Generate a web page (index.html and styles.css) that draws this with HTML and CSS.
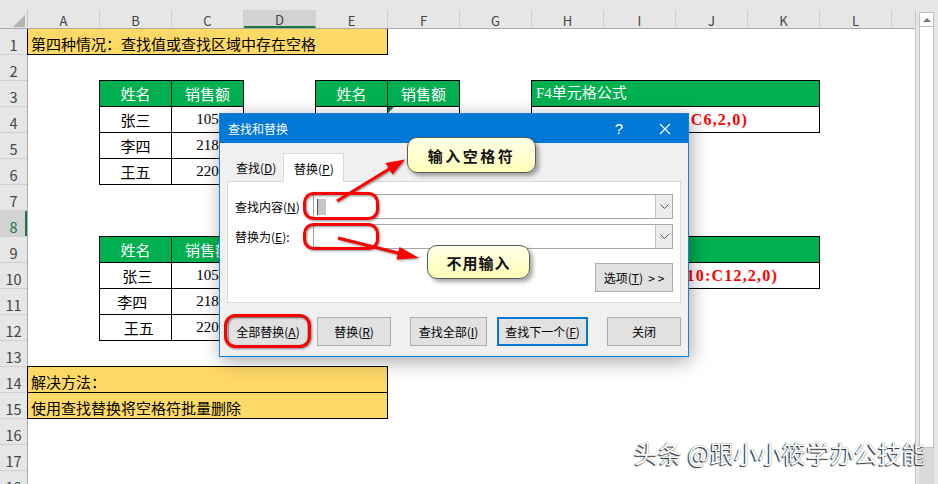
FILE: index.html
```html
<!DOCTYPE html>
<html lang="zh-CN">
<head>
    <meta charset="UTF-8">
    <meta name="viewport" content="width=device-width, initial-scale=1.0">
    <title>查找和替换 - 空格</title>
    <link rel="stylesheet" href="styles.css">
</head>
<body>
<div class="app">
    <div class="topbar"></div>

    <div class="workspace">
        <div class="sheet">
            <div class="col-heads">
                <div class="corner"><span class="corner-tri"></span></div>
                <div class="col-head">A</div>
                <div class="col-head">B</div>
                <div class="col-head">C</div>
                <div class="col-head sel">D</div>
                <div class="col-head">E</div>
                <div class="col-head">F</div>
                <div class="col-head">G</div>
                <div class="col-head">H</div>
                <div class="col-head">I</div>
                <div class="col-head">J</div>
                <div class="col-head">K</div>
                <div class="col-head">L</div>
                <div class="col-head last"></div>
            </div>

            <div class="sheet-body">
                <div class="row-heads">
                    <div class="row-head">1</div>
                    <div class="row-head">2</div>
                    <div class="row-head">3</div>
                    <div class="row-head">4</div>
                    <div class="row-head">5</div>
                    <div class="row-head">6</div>
                    <div class="row-head">7</div>
                    <div class="row-head sel">8</div>
                    <div class="row-head">9</div>
                    <div class="row-head">10</div>
                    <div class="row-head">11</div>
                    <div class="row-head">12</div>
                    <div class="row-head">13</div>
                    <div class="row-head">14</div>
                    <div class="row-head">15</div>
                    <div class="row-head">16</div>
                    <div class="row-head">17</div>
                    <div class="row-head">18</div>
                </div>

                <div class="cells">
                    <div class="blk blk-title">
                        <div class="c y">第四种情况：查找值或查找区域中存在空格</div>
                    </div>

                    <!-- B3:C6 -->
                    <div class="blk cols-2 blk-t1">
                        <div class="c hd">姓名</div>
                        <div class="c hd">销售额</div>
                        <div class="c">张三</div>
                        <div class="c num">105</div>
                        <div class="c">李四</div>
                        <div class="c num">218</div>
                        <div class="c">王五</div>
                        <div class="c num">220</div>
                    </div>

                    <!-- E3:F4 -->
                    <div class="blk cols-2 blk-t2">
                        <div class="c hd">姓名</div>
                        <div class="c hd">销售额</div>
                        <div class="c red">张三</div>
                        <div class="c red num err">#N/A</div>
                    </div>

                    <!-- H3:K4 -->
                    <div class="blk blk-t3">
                        <div class="c hd left serif">F4单元格公式</div>
                        <div class="c fx fx4">=VLOOKUP(E4,B4:C6,2,0)</div>
                    </div>

                    <!-- B9:C12 -->
                    <div class="blk cols-2 blk-t4">
                        <div class="c hd">姓名</div>
                        <div class="c hd">销售额</div>
                        <div class="c"> 张三</div>
                        <div class="c num">105</div>
                        <div class="c">李四  </div>
                        <div class="c num">218</div>
                        <div class="c">  王五</div>
                        <div class="c num">220</div>
                    </div>

                    <!-- E9:F10 -->
                    <div class="blk cols-2 blk-t5">
                        <div class="c hd">姓名</div>
                        <div class="c hd">销售额</div>
                        <div class="c">张三 </div>
                        <div class="c num">105</div>
                    </div>

                    <!-- H9:K10 -->
                    <div class="blk blk-t6">
                        <div class="c hd left serif">F10单元格公式</div>
                        <div class="c fx fx10">=VLOOKUP(E10,B10:C12,2,0)</div>
                    </div>

                    <div class="blk blk-note">
                        <div class="c y">解决方法：</div>
                        <div class="c y">使用查找替换将空格符批量删除</div>
                    </div>
                </div>
            </div>
        </div>

        <div class="vscroll">
            <div class="vs-up"><span class="vs-arrow"></span></div>
            <div class="vs-track"></div>
            <div class="vs-end"></div>
        </div>
    </div>

    <!-- Find and replace dialog -->
    <div class="dlg">
        <div class="dlg-title">
            <span class="dlg-name">查找和替换</span>
            <span class="dlg-btn">?</span>
            <span class="dlg-btn">
                <svg width="12" height="12" viewBox="0 0 12 12"><path d="M1 1L11 11M11 1L1 11" stroke="#fff" stroke-width="1.2" fill="none"/></svg>
            </span>
        </div>
        <div class="dlg-body">
            <div class="tabs">
                <div class="tab">查找(<u>D</u>)</div>
                <div class="tab active">替换(<u>P</u>)</div>
            </div>
            <div class="panel">
                <div class="field">
                    <span class="label">查找内容(<u>N</u>)</span>
                    <div class="combo">
                        <span class="sel-space"></span>
                        <span class="combo-drop"><svg width="9" height="5" viewBox="0 0 9 5"><path d="M0.5 0.5L4.5 4.5L8.5 0.5" stroke="#555" fill="none"/></svg></span>
                    </div>
                </div>
                <div class="field">
                    <span class="label">替换为(<u>E</u>):</span>
                    <div class="combo">
                        <span class="combo-drop"><svg width="9" height="5" viewBox="0 0 9 5"><path d="M0.5 0.5L4.5 4.5L8.5 0.5" stroke="#555" fill="none"/></svg></span>
                    </div>
                </div>
                <div class="opt-row">
                    <button class="btn btn-opt">选项(<u>T</u>)&nbsp;&nbsp;&gt; &gt;</button>
                </div>
            </div>
            <div class="actions">
                <button class="btn b-all">全部替换(<u>A</u>)</button>
                <button class="btn b-rep">替换(<u>R</u>)</button>
                <button class="btn b-find-all">查找全部(<u>I</u>)</button>
                <button class="btn b-next">查找下一个(<u>F</u>)</button>
                <button class="btn b-close">关闭</button>
            </div>
        </div>
    </div>

    <!-- annotations -->
    <svg class="marks" width="938" height="484" viewBox="0 0 938 484">
        <g fill="none" stroke="#ff0000" stroke-width="3">
            <rect x="304.5" y="193.5" width="73" height="25" rx="9"/>
            <rect x="304.5" y="224.5" width="73" height="24" rx="9"/>
            <rect x="225.5" y="315.5" width="84" height="31" rx="10"/>
            <line x1="337" y1="201" x2="390" y2="168.5"/>
            <line x1="338" y1="238" x2="400" y2="253.5"/>
        </g>
        <g fill="#ff0000">
            <polygon points="405,159.5 392.5,174.5 385.5,163"/>
            <polygon points="419,258 396.5,259.5 399.5,247"/>
        </g>
    </svg>

    <div class="callout callout-space">输入空格符</div>
    <div class="callout callout-none">不用输入</div>

    <div class="watermark">头条 @跟小小筱学办公技能</div>
</div>
</body>
</html>
```

FILE: styles.css
```css
* {
    margin: 0;
    padding: 0;
    box-sizing: border-box;
}

body {
    font-family: "Noto Sans CJK SC", sans-serif;
    background: #fff;
}

.app {
    position: relative;
    width: 938px;
    height: 484px;
    overflow: hidden;
    background: #e6e6e6;
}

.topbar {
    height: 10px;
}

.workspace {
    display: flex;
    height: 474px;
}

/* ---------- sheet ---------- */

.sheet {
    width: 916px;
    display: flex;
    flex-direction: column;
    border-right: 1px solid #c6c6c6;
    background: #fff;
}

.col-heads {
    display: flex;
    height: 19px;
    flex-shrink: 0;
    background: #e6e6e6;
    border-bottom: 1px solid #ababab;
}

.corner {
    width: 28px;
    display: flex;
    align-items: flex-end;
    justify-content: flex-end;
    padding: 0 2px 1px 0;
    border-right: 1px solid #c6c6c6;
}

.corner-tri {
    width: 0;
    height: 0;
    border-left: 12px solid transparent;
    border-bottom: 12px solid #b4b4b4;
}

.col-head {
    width: 72px;
    flex-shrink: 0;
    text-align: center;
    font-size: 13px;
    line-height: 21px;
    color: #444;
    border-right: 1px solid #d0d0d0;
}

.col-head.sel {
    background: #d2d2d2;
    border-bottom: 2px solid #217346;
    line-height: 19px;
}

.col-head.last {
    flex: 1;
    border-right: none;
}

.sheet-body {
    display: flex;
    flex: 1;
    overflow: hidden;
}

.row-heads {
    width: 28px;
    flex-shrink: 0;
    background: #e6e6e6;
    border-right: 1px solid #ababab;
}

.row-head {
    height: 26px;
    display: flex;
    align-items: flex-end;
    justify-content: center;
    padding-bottom: 2px;
    font-size: 14.5px;
    line-height: 1;
    color: #444;
    border-bottom: 1px solid #d0d0d0;
}

.row-head.sel {
    background: #d2d2d2;
    color: #217346;
    box-shadow: inset -2px 0 0 #217346;
}

.cells {
    flex: 1;
    display: grid;
    grid-template-columns: repeat(12, 72px) 1fr;
    grid-template-rows: repeat(18, 26px);
}

/* bordered blocks: black shows through the 1px gaps */
.blk {
    margin: -1px 0 0 -1px;
    display: grid;
    gap: 1px;
    padding: 1px;
    background: #000;
    grid-auto-rows: 1fr;
}

.cols-2 { grid-template-columns: 1fr 1fr; }

.blk-title { grid-column: 1 / 6; grid-row: 1; }
.blk-t1 { grid-column: 2 / 4; grid-row: 3 / 7; }
.blk-t2 { grid-column: 5 / 7; grid-row: 3 / 5; }
.blk-t3 { grid-column: 8 / 12; grid-row: 3 / 5; }
.blk-t4 { grid-column: 2 / 4; grid-row: 9 / 13; }
.blk-t5 { grid-column: 5 / 7; grid-row: 9 / 11; }
.blk-t6 { grid-column: 8 / 12; grid-row: 9 / 11; }
.blk-note { grid-column: 1 / 6; grid-row: 14 / 16; }

.c {
    position: relative;
    display: flex;
    align-items: center;
    justify-content: center;
    background: #fff;
    font-size: 15px;
    line-height: 1;
    color: #000;
    white-space: pre;
    overflow: hidden;
}

.c.hd {
    background: #00b050;
    color: #fff;
}

.c.y {
    background: #ffd966;
    justify-content: flex-start;
    align-items: flex-end;
    padding: 0 0 3px 3px;
}

.c.left {
    justify-content: flex-start;
    padding-left: 4px;
}

.serif {
    font-family: "Liberation Serif", "Noto Sans CJK SC", serif;
}

.num {
    font-family: "Liberation Serif", serif;
}

.red { color: #ff0000; }

.err::before {
    content: "";
    position: absolute;
    left: 0;
    top: 0;
    border-top: 6px solid #1e7145;
    border-right: 6px solid transparent;
}

.fx {
    justify-content: flex-end;
    color: #ff0000;
    font-family: "Liberation Serif", serif;
    font-weight: bold;
    font-size: 16px;
    letter-spacing: 1.2px;
}

.fx4 { padding-right: 71px; }
.fx10 { padding-right: 41px; }

/* ---------- scrollbar ---------- */

.vscroll {
    width: 15px;
    margin: 2px 4px 0 3px;
    display: flex;
    flex-direction: column;
}

.vs-up {
    height: 15px;
    display: flex;
    align-items: center;
    justify-content: center;
    background: #fff;
    border: 1px solid #c2c2c2;
}

.vs-arrow {
    width: 0;
    height: 0;
    border-left: 4px solid transparent;
    border-right: 4px solid transparent;
    border-bottom: 4px solid #777;
}

.vs-track {
    flex: 1;
    background: #fff;
    border: 1px solid #c2c2c2;
    border-top: none;
}

.vs-end {
    height: 36px;
    background: #dadada;
}

/* ---------- dialog ---------- */

.dlg {
    position: absolute;
    left: 219px;
    top: 113px;
    width: 470px;
    height: 244px;
    background: #f0f0f0;
    border: 1px solid #1a7fd6;
    box-shadow: 2px 4px 18px rgba(0, 0, 0, 0.35);
    font-size: 12px;
    color: #000;
}

.dlg-title {
    display: flex;
    align-items: center;
    height: 29px;
    padding-left: 8px;
    background: #0078d7;
    color: #fff;
}

.dlg-name {
    flex: 1;
    font-size: 12px;
}

.dlg-btn {
    width: 46px;
    height: 29px;
    display: flex;
    align-items: center;
    justify-content: center;
    font-family: "Liberation Sans", sans-serif;
    font-size: 15px;
}

.dlg-body {
    padding: 10px 7px 0;
}

.tabs {
    display: flex;
    align-items: flex-end;
    height: 28px;
}

.tab {
    width: 56px;
    height: 25px;
    padding-left: 9px;
    line-height: 23px;
}

.tab.active {
    position: relative;
    z-index: 1;
    width: 61px;
    height: 29px;
    margin-bottom: -1px;
    padding-left: 10px;
    line-height: 30px;
    background: #fff;
    border: 1px solid #d9d9d9;
    border-bottom: none;
}

.panel {
    background: #fff;
    border: 1px solid #d9d9d9;
    padding: 12px 7px 10px;
}

.field {
    display: flex;
    align-items: center;
}

.field + .field {
    margin-top: 5px;
}

.label {
    width: 78px;
    flex-shrink: 0;
}

.combo {
    flex: 1;
    height: 25px;
    display: flex;
    align-items: center;
    padding-left: 3px;
    background: #fff;
    border: 1px solid #a8a8a8;
}

.sel-space {
    width: 9px;
    height: 16px;
    background: #c6c6c6;
    border-left: 1px solid #555;
}

.combo-drop {
    margin-left: auto;
    width: 17px;
    height: 23px;
    display: flex;
    align-items: center;
    justify-content: center;
    background: #ececec;
    border-left: 1px solid #c4c4c4;
}

.opt-row {
    display: flex;
    justify-content: flex-end;
    margin-top: 14px;
}

.btn {
    height: 29px;
    background: #e1e1e1;
    border: 1px solid #adadad;
    font-family: "Noto Sans CJK SC", sans-serif;
    font-size: 12px;
    color: #000;
}

.btn-opt {
    width: 78px;
}

.actions {
    display: flex;
    margin-top: 14px;
}

.b-all { width: 80px; margin-left: 1px; }
.b-rep { width: 74px; margin-left: 9px; }
.b-find-all { width: 77px; margin-left: 19px; }
.b-next { width: 91px; margin-left: 10px; border: 2px solid #0078d7; }
.b-close { width: 74px; margin-left: 19px; }

/* ---------- annotations ---------- */

.marks {
    position: absolute;
    left: 0;
    top: 0;
    pointer-events: none;
    filter: drop-shadow(1px 1px 1px rgba(0, 0, 0, 0.45));
}

.callout {
    position: absolute;
    display: flex;
    align-items: center;
    justify-content: center;
    background: linear-gradient(#ffffe8, #ffffb8);
    border: 1px solid #5a5a5a;
    border-radius: 10px;
    box-shadow: 3px 3px 4px rgba(0, 0, 0, 0.35);
    font-size: 15px;
    font-weight: bold;
    color: #111;
}

.callout-space {
    left: 407px;
    top: 137px;
    width: 129px;
    height: 36px;
    letter-spacing: 2.5px;
}

.callout-none {
    left: 427px;
    top: 245px;
    width: 103px;
    height: 34px;
    letter-spacing: 1px;
}

.watermark {
    position: absolute;
    left: 634px;
    top: 439px;
    font-size: 24px;
    line-height: 1.2;
    color: #fff;
    text-shadow: -1px 1px 1px rgba(0, 0, 0, 0.85), 0 0 1px rgba(0, 0, 0, 0.6);
    white-space: nowrap;
}
```
